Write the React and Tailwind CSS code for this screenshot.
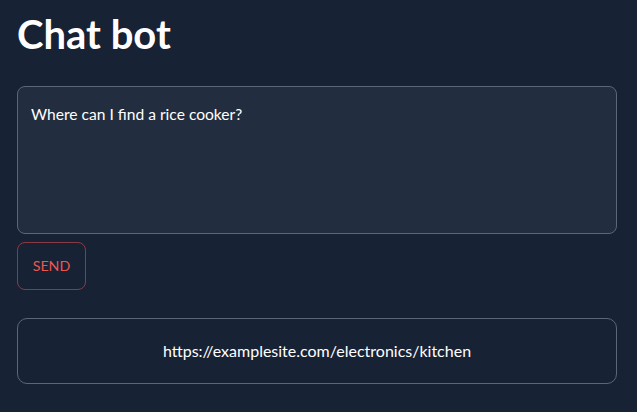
export default function App() {
  return (
    <div className="min-h-[412px] w-full bg-[#182235] pl-[17px] pt-[10px] text-white" style={{ fontFamily: "Lato, 'Liberation Sans', sans-serif" }}>
      <h1 className="text-[40px] font-bold leading-[48px]">Chat bot</h1>
      <div className="mt-[28px] h-[148px] w-[600px] rounded-[8px] border border-[#5b6676] bg-[#222d40] px-[13px] py-[17px] text-[15.6px] leading-[20px]">
        Where can I find a rice cooker?
      </div>
      <button className="mt-[8px] flex h-[48px] w-[69px] items-center justify-center rounded-[8px] border border-[#8a3a44] text-[14.2px] text-[#f0564e]">
        SEND
      </button>
      <div className="mt-[28px] flex h-[66px] w-[600px] items-center justify-center rounded-[10px] border border-[#5b6676] text-[16px]">
        https://examplesite.com/electronics/kitchen
      </div>
    </div>
  );
}
